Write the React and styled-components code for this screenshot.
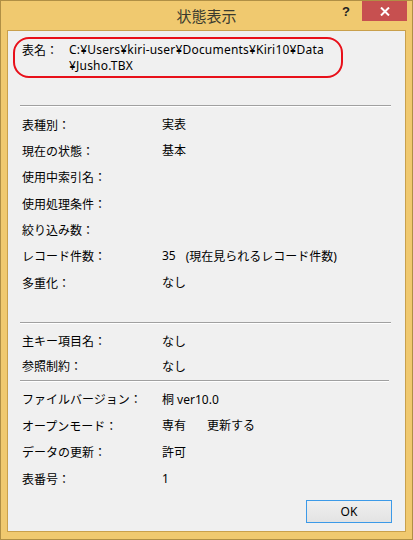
import React from "react";
import styled, { createGlobalStyle } from "styled-components";

const Global = createGlobalStyle`
  html, body { margin: 0; padding: 0; background: #f0c96f; }
  body { width: 413px; height: 540px; overflow: hidden; }
  * { box-sizing: border-box; }
`;

const Window = styled.div`
  width: 413px;
  height: 540px;
  border: 1px solid #b08f45;
  background: #f0c96f;
  display: flex;
  flex-direction: column;
  font-family: "Noto Sans", "Noto Sans CJK JP", sans-serif;
  font-size: 12px;
  color: #000;
`;

const TitleBar = styled.div`
  height: 29px;
  flex: none;
  display: grid;
  grid-template-columns: 1fr auto 1fr;
  align-items: start;
`;

const Title = styled.div`
  grid-column: 2;
  font-family: "Noto Sans CJK JP", sans-serif;
  font-size: 15px;
  line-height: 29px;
  color: #3a3a2e;
`;

const Controls = styled.div`
  grid-column: 3;
  justify-self: end;
  display: flex;
  align-items: flex-start;
  margin-right: 5px;
`;

const HelpButton = styled.div`
  width: 30px;
  height: 20px;
  display: flex;
  align-items: center;
  justify-content: center;
  font-family: "Liberation Sans", sans-serif;
  font-weight: bold;
  font-size: 13px;
  color: #222;
  margin-right: 1px;
`;

const CloseButton = styled.div`
  width: 45px;
  height: 20px;
  background: #c75050;
  display: flex;
  align-items: center;
  justify-content: center;
`;

const Client = styled.div`
  flex: 1;
  margin: 0 6px 7px 6px;
  border: 1px solid #c9a04c;
  background: #f0f0f0;
  display: flex;
  flex-direction: column;
`;

const Highlight = styled.div`
  margin: 6px 0 0 5px;
  width: 330px;
  height: 41px;
  border: 2px solid #e8101a;
  border-radius: 16px;
  padding: 3px 0 0 7px;
  display: grid;
  grid-template-columns: 47px 1fr;
  line-height: 16px;
`;

const Path = styled.div`
  font-size: 12px;
  letter-spacing: 0.2px;
`;

const Separator = styled.div`
  height: 2px;
  margin: ${(p) => p.$top}px ${(p) => p.$right}px 0 12px;
  border-top: 1px solid #a0a0a0;
  border-bottom: 1px solid #ffffff;
`;

const Section = styled.div`
  margin-top: ${(p) => p.$top}px;
  display: flex;
  flex-direction: column;
`;

const Row = styled.div`
  height: ${(p) => p.$h}px;
  display: grid;
  grid-template-columns: 140px 1fr;
  align-items: center;
  padding-left: 14px;
`;

const Label = styled.span`
  font-family: "Noto Sans CJK JP", sans-serif;
  font-size: 12px;
`;

const Value = styled.span`
  display: flex;
  gap: ${(p) => p.$gap || 0}px;
`;

const Footer = styled.div`
  margin-top: auto;
  display: flex;
  justify-content: flex-end;
  padding: 0 13px 8px 0;
`;

const OkButton = styled.button`
  width: 86px;
  height: 23px;
  border: 1px solid #3c9ae8;
  background: linear-gradient(#efefef, #e3e3e3);
  font-family: "Noto Sans", sans-serif;
  font-size: 12px;
  color: #000;
  padding: 0;
  margin: 0;
`;

const sec1 = [
  ["表種別：", ["実表"]],
  ["現在の状態：", ["基本"]],
  ["使用中索引名：", []],
  ["使用処理条件：", []],
  ["絞り込み数：", []],
  ["レコード件数：", ["35", "(現在見られるレコード件数)"], 10],
  ["多重化：", ["なし"]],
];

const sec2 = [
  ["主キー項目名：", ["なし"]],
  ["参照制約：", ["なし"]],
];

export default function App() {
  return (
    <>
      <Global />
      <Window>
        <TitleBar>
          <Title>状態表示</Title>
          <Controls>
            <HelpButton>?</HelpButton>
            <CloseButton>
              <svg width="10" height="9" viewBox="0 0 10 9">
                <path d="M1 0.5 L9 8.5 M9 0.5 L1 8.5" stroke="#fff" strokeWidth="2" />
              </svg>
            </CloseButton>
          </Controls>
        </TitleBar>
        <Client>
          <Highlight>
            <Label>表名：</Label>
            <Path>
              C:¥Users¥kiri-user¥Documents¥Kiri10¥Data
              <br />
              ¥Jusho.TBX
            </Path>
          </Highlight>
          <Separator $top={27} $right={14} />
          <Section $top={4}>
            {sec1.map(([l, v, g]) => (
              <Row key={l} $h={26.33}>
                <Label>{l}</Label>
                <Value $gap={g}>
                  {v.map((t) => (
                    <span key={t}>{t}</span>
                  ))}
                </Value>
              </Row>
            ))}
          </Section>
          <Separator $top={27} $right={14} />
          <Section $top={4}>
            {sec2.map(([l, v]) => (
              <Row key={l} $h={25}>
                <Label>{l}</Label>
                <Value>
                  {v.map((t) => (
                    <span key={t}>{t}</span>
                  ))}
                </Value>
              </Row>
            ))}
          </Section>
          <Separator $top={2} $right={16} />
          <Section $top={3}>
            <Row $h={26.67}>
              <Label>ファイルバージョン：</Label>
              <Value>桐 ver10.0</Value>
            </Row>
            <Row $h={26.67}>
              <Label>オープンモード：</Label>
              <Value $gap={21}>
                <span>専有</span>
                <span>更新する</span>
              </Value>
            </Row>
            <Row $h={26.67}>
              <Label>データの更新：</Label>
              <Value>許可</Value>
            </Row>
            <Row $h={26.67}>
              <Label>表番号：</Label>
              <Value>1</Value>
            </Row>
          </Section>
          <Footer>
            <OkButton>OK</OkButton>
          </Footer>
        </Client>
      </Window>
    </>
  );
}
